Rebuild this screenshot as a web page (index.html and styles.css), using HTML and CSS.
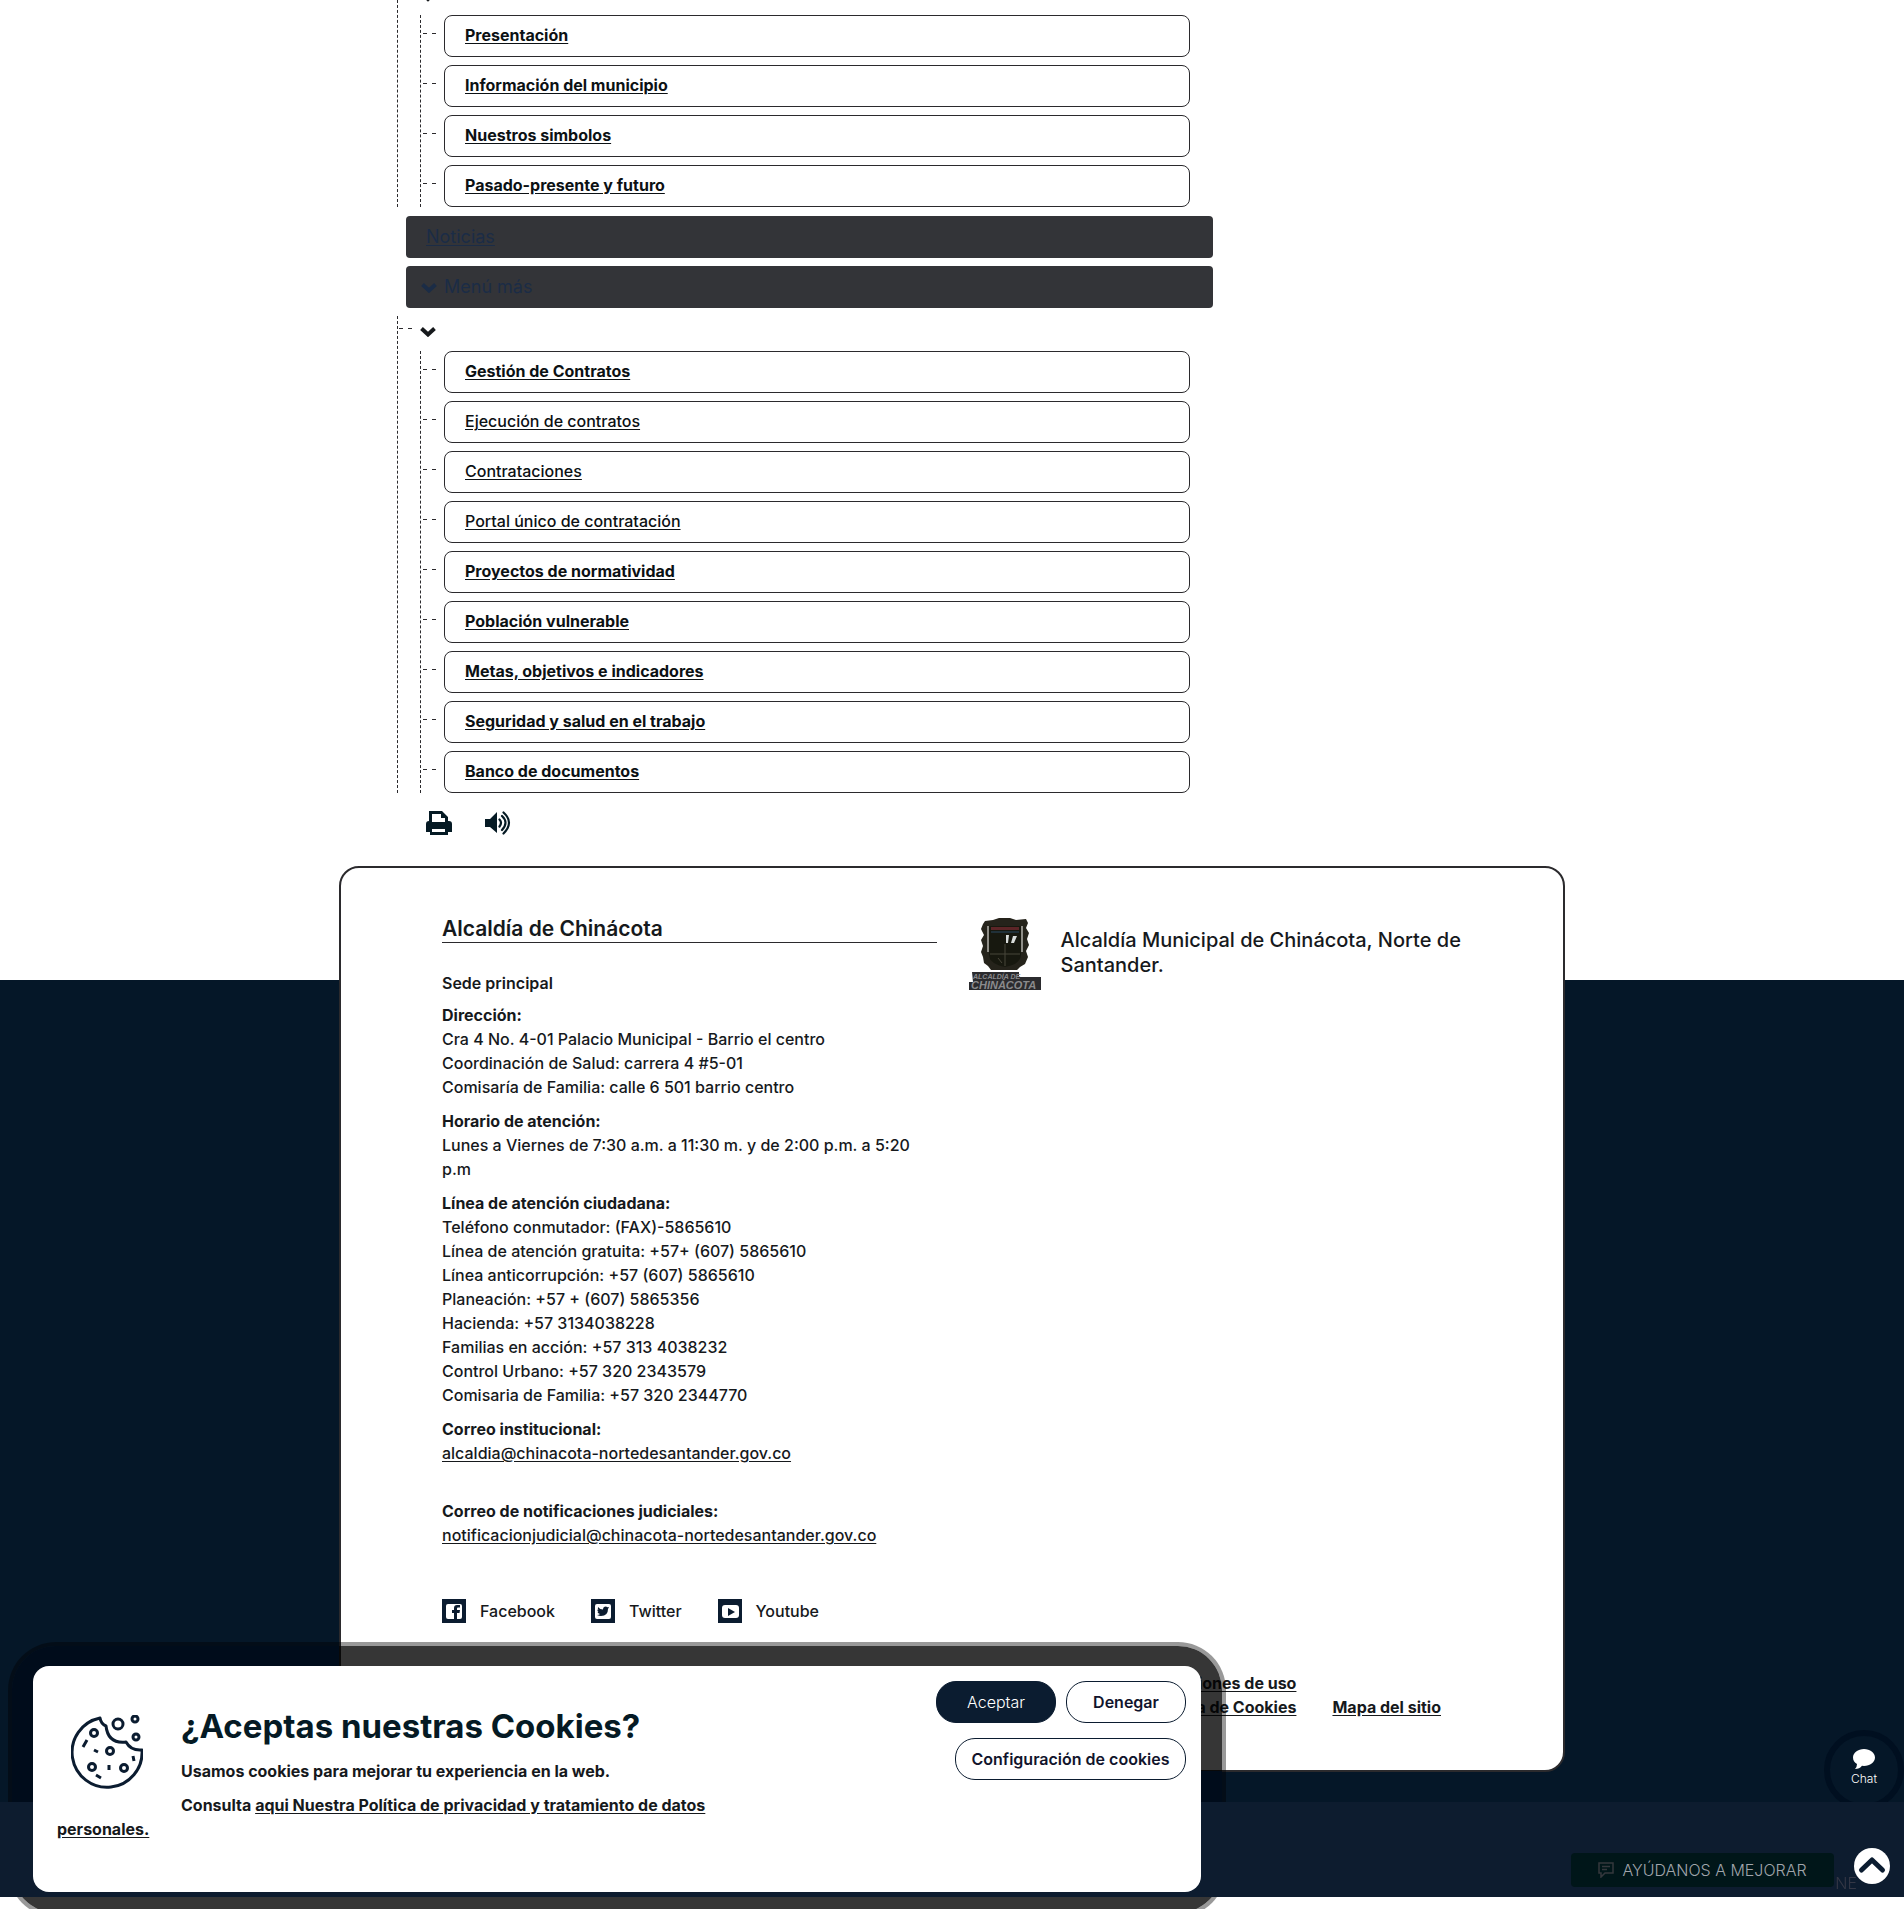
FILE: index.html
```html
<!DOCTYPE html>
<html lang="es">
<head>
<meta charset="utf-8">
<meta name="viewport" content="width=device-width, initial-scale=1">
<title>Alcaldía de Chinácota</title>
<link rel="stylesheet" href="styles.css">
</head>
<body>
<main class="sitemap">
  <div class="branch">
    <svg class="chevron-end" viewBox="0 12 16 2" aria-hidden="true"><path d="M2 5l6 6 6-6" fill="none" stroke="currentColor" stroke-width="4"/></svg>
    <ul class="leaves">
      <li><a class="strong" href="#">Presentación</a></li>
      <li><a class="strong" href="#">Información del municipio</a></li>
      <li><a class="strong" href="#">Nuestros simbolos</a></li>
      <li><a class="strong" href="#">Pasado-presente y futuro</a></li>
    </ul>
  </div>
  <a class="bar" href="#">Noticias</a>
  <button class="bar bar-toggle" type="button"><svg viewBox="0 0 16 11" aria-hidden="true"><path d="M1.500 2.500l6.500 6 6.500-6" fill="none" stroke="currentColor" stroke-width="4"/></svg>Menú más</button>
  <div class="branch">
    <div class="branch-head"><svg viewBox="0 0 16 11" aria-hidden="true"><path d="M1.500 2.500l6.500 6 6.500-6" fill="none" stroke="currentColor" stroke-width="4"/></svg></div>
    <ul class="leaves">
      <li><a class="strong" href="#">Gestión de Contratos</a></li>
      <li><a href="#">Ejecución de contratos</a></li>
      <li><a href="#">Contrataciones</a></li>
      <li><a href="#">Portal único de contratación</a></li>
      <li><a class="strong" href="#">Proyectos de normatividad</a></li>
      <li><a class="strong" href="#">Población vulnerable</a></li>
      <li><a class="strong" href="#">Metas, objetivos e indicadores</a></li>
      <li><a class="strong" href="#">Seguridad y salud en el trabajo</a></li>
      <li><a class="strong" href="#">Banco de documentos</a></li>
    </ul>
  </div>
  <div class="tools">
    <button type="button" aria-label="Imprimir"><svg viewBox="0 0 26 24"><path fill="currentColor" d="M3 0h13l6 6v4h1a3 3 0 0 1 3 3v8h-4v3H4v-3H0v-8a3 3 0 0 1 3-3zM6 3v8h13V7h-4V3zM6 18v3h13v-3z" fill-rule="evenodd"/></svg></button>
    <button type="button" aria-label="Escuchar"><svg viewBox="0 0 26 24"><path fill="currentColor" d="M0 8h5l7-7v21l-7-6H0z"/><path fill="none" stroke="currentColor" stroke-width="2.200" stroke-linecap="round" d="M14.500 8.500q3 3 0 7M17 5q7 6.500 0 14M18.500 1.500q11 10 0 21"/></svg></button>
  </div>
</main>

<footer class="site-footer">
  <div class="card">
    <div class="columns">
      <section class="contact">
        <h2>Alcaldía de Chinácota</h2>
        <h3>Sede principal</h3>
        <p><strong>Dirección:</strong><br>Cra 4 No. 4-01 Palacio Municipal - Barrio el centro<br>Coordinación de Salud: carrera 4 #5-01<br>Comisaría de Familia: calle 6 501 barrio centro</p>
        <p><strong>Horario de atención:</strong><br>Lunes a Viernes de 7:30 a.m. a 11:30 m. y de 2:00 p.m. a 5:20 p.m</p>
        <p><strong>Línea de atención ciudadana:</strong><br>Teléfono conmutador: (FAX)-5865610<br>Línea de atención gratuita: +57+ (607) 5865610<br>Línea anticorrupción: +57 (607) 5865610<br>Planeación: +57 + (607) 5865356<br>Hacienda: +57 3134038228<br>Familias en acción: +57 313 4038232<br>Control Urbano: +57 320 2343579<br>Comisaria de Familia: +57 320 2344770</p>
        <p class="mail"><strong>Correo institucional:</strong><br><a href="#">alcaldia@chinacota-nortedesantander.gov.co</a></p>
        <p class="mail"><strong>Correo de notificaciones judiciales:</strong><br><a href="#">notificacionjudicial@chinacota-nortedesantander.gov.co</a></p>
      </section>
      <section class="entity">
        <svg class="crest" viewBox="0 0 72 72" aria-hidden="true">
          <path fill="#25231b" d="M16 3l8-1 6-2h11l6 2 10-1 2 4-2 5 3 5-2 6 2 6-3 6 2 6-3 7-5 3-3 3H22l-3-4-4-3-1-6-2-5 2-6-2-6 3-5-3-6 2-5z"/>
          <path d="M20 8v28c0 8 7 11 16 13 9-2 16-5 16-13V8z" fill="#17180f"/>
          <path d="M19 8v26M53 8v26" stroke="#faf9f5" stroke-width="1"/>
          <path fill="#5c2527" d="M22 9h28v3H22z"/><path fill="#203038" d="M22 13h28v2H22z"/>
          <path fill="#d8dcda" d="M37 17h3l-1 8h-2zM44 18h4l-3 7h-3z"/>
          <path stroke="#49473a" d="M36 26v22M21 36h30M29 40l4 5" fill="none"/>
          <path fill="#2b2b2e" d="M3 54h47v5h22v13H0v-8h4z"/>
          <text x="4" y="61" class="crest-small">ALCALDÍA DE</text><text x="2" y="71" class="crest-large">CHINÁCOTA</text>
        </svg>
        <p>Alcaldía Municipal de Chinácota, Norte de Santander.</p>
      </section>
    </div>
    <nav class="social" aria-label="Redes sociales">
      <a href="#"><svg viewBox="0 0 24 24" aria-hidden="true"><path fill="#0b1c30" d="M0 0h24v24H0z"/><rect x="4" y="5" width="16" height="15" rx="2" fill="#fff"/><path fill="#0b1c30" d="M12 20v-6h-2v-3h2V9q0-3 3-3h3v2.500h-2q-1 0-1 1V11h3l-.5 3H15v6z"/></svg>Facebook</a>
      <a href="#"><svg viewBox="0 0 24 24" aria-hidden="true"><path fill="#0b1c30" d="M0 0h24v24H0z"/><rect x="4" y="5" width="16" height="15" rx="2" fill="#fff"/><path fill="#0b1c30" d="M7 8q2 2.500 5 2.500 0-3 3-3l1.500.7L18 8l-1 2q0 7-7 7-2 0-4-1 2 0 3-1-2-.3-2.500-2h1Q6 12 6.500 10.500l1 .3Q6.500 10 7 8z"/></svg>Twitter</a>
      <a href="#"><svg viewBox="0 0 24 24" aria-hidden="true"><path fill="#0b1c30" d="M0 0h24v24H0z"/><rect x="4" y="6" width="17" height="13" rx="3" fill="#fff"/><path fill="#0b1c30" d="M10 9l7 4-7 4z"/></svg>Youtube</a>
    </nav>
    <nav class="legal" aria-label="Enlaces legales">
      <div><a href="#">Condiciones de uso</a><a href="#">Política de Cookies</a></div>
      <a href="#">Mapa del sitio</a>
    </nav>
  </div>
</footer>
<div class="base-bar"></div>

<div class="cookie-shade"></div>
<a class="chat" href="#"><svg viewBox="0 0 22 20" aria-hidden="true"><path fill="currentColor" d="M11 0c6 0 11 3.800 11 8.500S17 17 11 17l-2-.2Q6.500 20 2 20q2-2 2-5-4-2.500-4-6.500C0 3.800 5 0 11 0z"/></svg>Chat</a>
<span class="brand">NE</span>
<button class="improve" type="button"><svg viewBox="0 0 16 16" aria-hidden="true"><path fill="none" stroke="currentColor" stroke-width="1.500" d="M1 1h14v10H7l-4 4v-4H1zM4 4.500h8M4 7.500h5"/></svg>AYÚDANOS A MEJORAR</button>
<a class="to-top" href="#" aria-label="Volver arriba"><svg viewBox="0 0 36 36"><circle cx="18" cy="18" r="18" fill="#fff"/><path d="M7.500 22L18 12l10.500 10" fill="none" stroke="#0b1c30" stroke-width="5" stroke-linecap="round" stroke-linejoin="round"/></svg></a>
<section class="cookie" aria-label="Cookies">
  <div class="cookie-text">
    <svg class="cookie-icon" viewBox="0 0 72 74" fill="none" stroke="#0b1c30" stroke-width="3" aria-hidden="true"><path stroke-linejoin="round" d="M29 3A35 35 0 1 0 71 35Q60 36 55 27 37 29 35 11 30 9 29 3z"/><g stroke-width="3"><circle cx="47" cy="9" r="5"/><circle cx="64" cy="4" r="3"/><circle cx="65" cy="22" r="3"/><circle cx="23" cy="18" r="3.500"/><circle cx="39" cy="36" r="3.500"/><circle cx="21" cy="52" r="3.500"/><circle cx="53" cy="53" r="3.500"/></g><path d="M16 25l-4 7M23 35l4 2M38 50v5M25 60l5 3M62 41l1 5"/></svg>
    <h2>¿Aceptas nuestras Cookies?</h2>
    <p>Usamos cookies para mejorar tu experiencia en la web.</p>
    <p>Consulta <a href="#">aqui Nuestra Política de privacidad y tratamiento de datos personales.</a></p>
  </div>
  <div class="cookie-actions">
    <button class="primary" type="button">Aceptar</button>
    <button type="button">Denegar</button>
    <button class="wide" type="button">Configuración de cookies</button>
  </div>
</section>
</body>
</html>
```
FILE: styles.css
```css
:root { --navy: #051728; --navy-light: #0d1c2f; --ink: #0b1c30; --line: #2b2a2d; }
* { box-sizing: border-box; }
body { margin: 0; padding-bottom: 13px; background: #fff; color: #16191c; font: 500 16px/24px Inter, "Open Sans", sans-serif; }
a { color: inherit; text-underline-offset: 2px; }
button { font: inherit; cursor: pointer; }
h2, h3, p, ul { margin: 0; padding: 0; }
svg { display: block; flex: none; }

/* site map tree */
.sitemap { max-width: 1224px; margin: 0 auto; padding: 0 351px 0 57px; }
.branch { border-left: 1px dashed var(--line); padding: 0 23px 0 22px; margin-bottom: 9px; }
.chevron-end { width: 16px; height: 2px; margin-bottom: 13px; }
.branch-head { position: relative; height: 35px; padding-top: 10px; }
.branch-head svg { width: 16px; height: 11px; }
.branch-head::before { content: ""; position: absolute; left: -21px; top: 12px; width: 13px; height: 1px; background: linear-gradient(90deg, var(--line) 4px, transparent 4px 9px, var(--line) 9px); }
.leaves { list-style: none; display: grid; gap: 8px; padding-left: 2px; border-left: 1px dashed var(--line); }
.leaves li { display: flex; gap: 8px; }
.leaves li::before { content: ""; width: 13px; height: 1px; margin-top: 18px; background: linear-gradient(90deg, var(--line) 4px, transparent 4px 9px, var(--line) 9px); }
.leaves a { flex: 1; padding: 7px 20px 9px; border: 1px solid var(--line); border-radius: 8px; color: #0c1114; }
.leaves .strong { font-weight: 700; }
.bar { display: flex; align-items: center; width: calc(100% - 9px); height: 42px; margin: 0 0 8px 9px; padding: 0 20px; border: 0; border-radius: 4px; background: #333438; color: #1b2c46; font-size: 18px; font-weight: 400; }
.bar-toggle { gap: 7px; padding: 0 15px; text-align: left; }
.bar-toggle svg { width: 16px; height: 11px; }
.tools { display: flex; gap: 33px; padding: 9px 0 31px 29px; }
.tools button { padding: 0; border: 0; background: none; color: #051a24; }
.tools svg { width: 26px; height: 24px; }

/* footer */
.site-footer { padding-bottom: 30px; background: linear-gradient(#fff 114px, var(--navy) 114px); }
.card { max-width: 1226px; margin: 0 auto; padding: 47px 100px 51px 101px; border: 2px solid var(--line); border-radius: 20px; background: #fff; }
.columns { display: grid; grid-template-columns: 1fr 1fr; gap: 32px; }
.contact h2 { border-bottom: 1px solid var(--line); font-size: 21px; line-height: 27px; font-weight: 600; }
.contact h3 { margin: 28px 0 8px; font-size: 16px; font-weight: 600; }
.contact p { margin-bottom: 10px; }
.contact .mail { margin-bottom: 34px; }
.entity { display: flex; gap: 20px; padding-top: 3px; }
.entity p { padding-top: 10px; font-size: 20px; line-height: 25px; font-weight: 500; }
.crest { width: 72px; height: 72px; }
.crest-small, .crest-large { fill: #8a8a8c; font-family: "Liberation Sans", sans-serif; font-size: 7px; font-style: italic; font-weight: 700; }
.crest-large { font-size: 11px; }
.social { display: flex; gap: 36px; margin-top: 18px; }
.social a { display: flex; align-items: center; gap: 14px; text-decoration: none; }
.social svg { width: 24px; height: 24px; }
.legal { display: flex; justify-content: flex-end; align-items: flex-end; gap: 36px; margin-top: 48px; padding-right: 22px; font-weight: 700; }
.legal div { display: grid; justify-items: end; }
.base-bar { position: relative; z-index: 2; height: 95px; background: var(--navy-light); }

/* floating elements */
.cookie-shade { position: fixed; z-index: 1; left: 12px; bottom: -4px; width: 1210px; max-width: 96%; height: 267px; border-radius: 44px; background: linear-gradient(#000c1b, #000c1b) 0 0 / 327px 157px no-repeat, linear-gradient(#000c1b, #000c1b) 0 125px / 100% 32px no-repeat, rgba(0, 0, 0, .79); box-shadow: 0 0 0 4px rgba(0, 0, 0, .4); }
.cookie { position: fixed; z-index: 3; left: 33px; bottom: 17px; display: flex; justify-content: space-between; width: 1168px; max-width: 92%; height: 226px; padding: 15px 15px 15px 24px; border-radius: 16px; background: #fff; font-weight: 700; }
.cookie-text { width: 690px; padding-top: 26px; }
.cookie-text h2 { margin-bottom: 14px; color: #051a24; font-size: 33px; line-height: 38px; font-weight: 700; }
.cookie-text p { margin-bottom: 10px; }
.cookie-icon { float: left; width: 72px; height: 74px; margin: 8px 38px 20px 14px; }
.cookie-actions { display: flex; flex-wrap: wrap; justify-content: flex-end; align-content: flex-start; gap: 15px 10px; width: 260px; }
.cookie-actions button { width: 120px; height: 42px; padding: 0; border: 1px solid var(--ink); border-radius: 20px; background: #fff; color: #11142c; font-weight: 600; }
.cookie-actions .primary { background: var(--ink); color: #fff; font-weight: 300; }
.cookie-actions .wide { width: 231px; }
.chat { position: fixed; z-index: 1; right: 0; bottom: 99px; display: flex; flex-direction: column; align-items: center; width: 80px; height: 80px; padding-top: 13px; border: 6px solid #000f20; border-radius: 50%; background: var(--navy); color: #fff; font-size: 12px; line-height: 20px; font-weight: 300; text-decoration: none; }
.chat svg { width: 22px; height: 20px; }
.brand { position: fixed; z-index: 3; right: 47px; bottom: 16px; color: #343745; font: 300 16px/20px Inter, sans-serif; }
.improve { position: fixed; z-index: 4; right: 70px; bottom: 22px; display: flex; align-items: center; justify-content: center; gap: 8px; width: 263px; height: 34px; padding: 0; border: 0; border-radius: 4px; background: #001619; color: #a0a5ac; font-size: 16px; font-weight: 300; white-space: nowrap; }
.improve svg { width: 16px; height: 16px; color: #34383d; }
.to-top { position: fixed; z-index: 4; right: 14px; bottom: 25px; }
.to-top svg { width: 36px; height: 36px; }
```
